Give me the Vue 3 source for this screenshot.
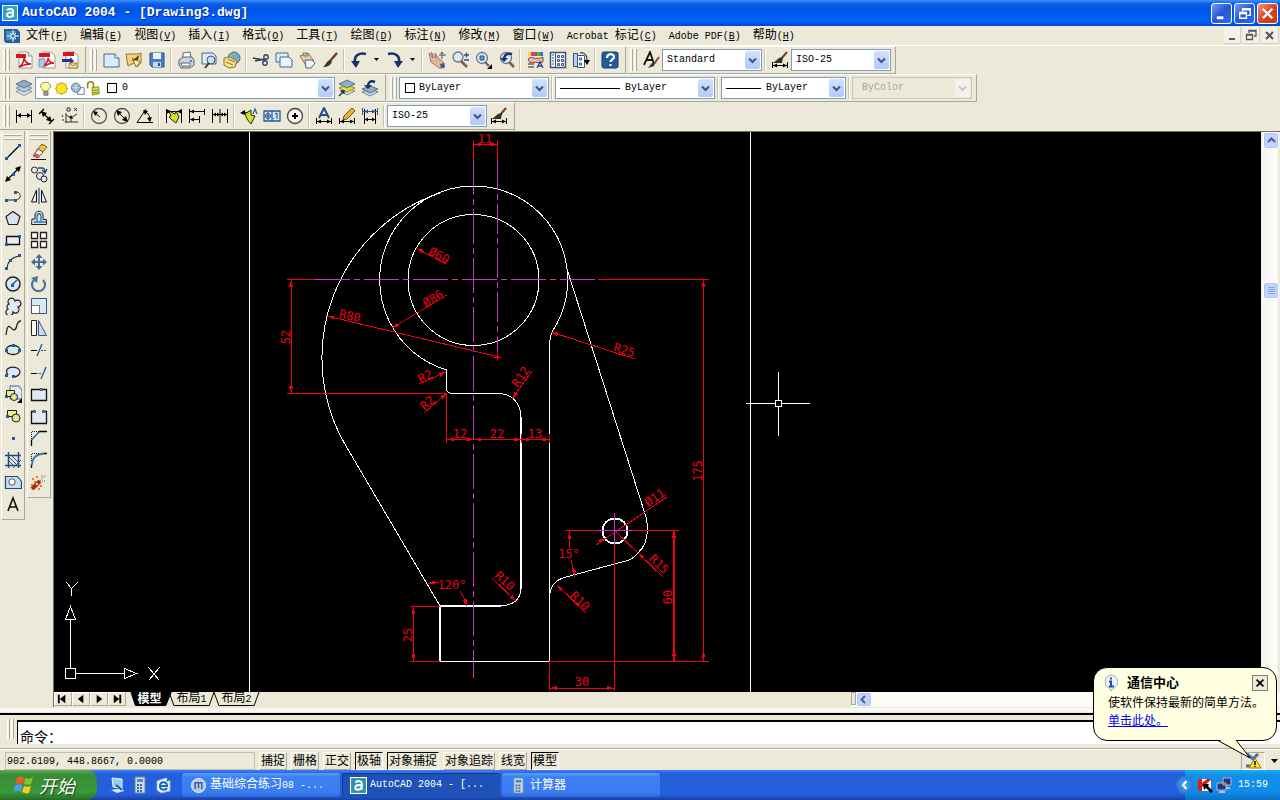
<script setup>
import { ref } from 'vue'

const I = {
  pdf: '<path d="M4 1h9l4 4v12H4z" fill="#fff" stroke="#999"/><path d="M13 1v4h4" fill="#ddd" stroke="#999"/><path d="M1 3h10v4H1z" fill="#d8141c"/><path d="M4 16c3-2 5-6 5-9 1 4 4 6 7 6-5 0-8 1-12 3" fill="none" stroke="#d8141c" stroke-width="1.6"/>',
  pdf2: '<path d="M5 1h8l4 4v12H5z" fill="#fff" stroke="#999"/><path d="M1 8h6v8H1z" fill="#aac8f4" stroke="#7294cc"/><path d="M1 2h11v4H1z" fill="#d8141c"/><path d="M6 15c2-2 4-5 4-8 1 4 3 5 6 5-4 0-6 1-10 3" fill="none" stroke="#d8141c" stroke-width="1.5"/>',
  pdf3: '<path d="M5 1h8l4 4v12H5z" fill="#fff" stroke="#999"/><path d="M2 1h11v4H2z" fill="#d8141c"/><path d="M1 8h8V6l4 4-4 4v-3H1z" fill="#2b2f98"/><path d="M8 12h8v5H8z" fill="#f7e3a0" stroke="#a28432"/><path d="M8 12l4 3 4-3" fill="none" stroke="#a28432"/>',
  new: '<path d="M2 3h11l4 4v9H2z" fill="#dcebfa" stroke="#45688f"/><path d="M13 3v4h4" fill="#fff" stroke="#45688f"/>',
  open: '<path d="M1 3l12 0 3-1v10l-4 4-3-4-6 3z" fill="#f0d480" stroke="#96752c"/><path d="M7 7l8 4-4 5z" fill="#fff0ae" stroke="#96752c"/><path d="M14 4l-7 6 6-1z" fill="#503c18"/>',
  save: '<path d="M2 2h14v14H4l-2-2z" fill="#4a7fc4" stroke="#284f8c"/><path d="M5 2h8v6H5z" fill="#edf4fc"/><path d="M5 11h8v5H5z" fill="#c6d9f0"/><path d="M10 12h2v3h-2z" fill="#284f8c"/>',
  print: '<path d="M6 7V2l7-1 1 6" fill="#fff" stroke="#667"/><path d="M2 9l4-3h9l2 3v5l-4 3H4l-2-3z" fill="#cdd2de" stroke="#5b617a"/><path d="M4 12h9v3H5z" fill="#fff" stroke="#5b617a"/><circle cx="14" cy="10" r="1" fill="#35a"/>',
  preview: '<path d="M2 2h11l3 3v8H2z" fill="#dcebfa" stroke="#45688f"/><circle cx="11" cy="9" r="4" fill="#bfe0ee" stroke="#456"/><path d="M9 12l-4 5" stroke="#4c3520" stroke-width="2"/>',
  publish: '<circle cx="11" cy="7" r="6" fill="#7cb4e4" stroke="#35648f"/><path d="M8 2c4 1 0 4 5 5M13 3l3 5" stroke="#7a9" stroke-width="2" fill="none"/><path d="M1 7l6-1 7 4-2 6-6 1-5-3z" fill="#f5de83" stroke="#8e742a"/><path d="M3 11l7 3M5 8l7 3" stroke="#8e742a"/>',
  cut: '<path d="M1 7l11 2M3 10l10-2" stroke="#333c4d" stroke-width="1.4"/><circle cx="14" cy="6" r="2.2" fill="none" stroke="#30446c" stroke-width="1.4"/><circle cx="13" cy="12" r="2.2" fill="none" stroke="#30446c" stroke-width="1.4"/>',
  copy: '<path d="M1 2h12v9H1z" fill="#dcebfa" stroke="#45688f"/><path d="M5 6h9l3 3v7H5z" fill="#e9f3fd" stroke="#45688f"/>',
  paste: '<path d="M2 5l8-3 6 8-7 6z" fill="#e5d3a0" stroke="#8b7647"/><path d="M5 2h4l1 3H6z" fill="#bbb" stroke="#777"/><path d="M7 9h7l3 3-4 5H8z" fill="#eef4fb" stroke="#567"/>',
  brush: '<path d="M16 2l-7 8" stroke="#6a3c20" stroke-width="2.4"/><path d="M9 9l2 2c-2 4-5 5-9 5 3-2 3-6 7-7" fill="#34363a"/>',
  undo: '<path d="M16 3C9 1 4 5 5 11" fill="none" stroke="#17336a" stroke-width="2.6"/><path d="M1 10h9l-4 7z" fill="#17336a"/>',
  redo: '<path d="M2 3c7-2 12 2 11 8" fill="none" stroke="#17336a" stroke-width="2.6"/><path d="M17 10H8l4 7z" fill="#17336a"/>',
  drop: '<path d="M2 7h5l-2.500 3z" fill="#000"/>',
  pan: '<path d="M1 2l4 5-2-6 5 6-1-5 4 6 2 1 3 3v5h-5L3 11z" fill="#e7b39c" stroke="#875544" stroke-width=".7"/><path d="M12 13l4-1 1 4-4 1z" fill="#325b9a"/><path d="M14 1v7M11 4h7M12.500 2.500l1.500-1.500 1.500 1.500" fill="none" stroke="#36547d"/>',
  zoomrt: '<circle cx="7" cy="6" r="5" fill="#d8eaf4" stroke="#697886" stroke-width="1.3"/><path d="M10 10l6 6" stroke="#805f43" stroke-width="2.6"/><path d="M13 4h5M15.500 1.500v5M13 9h5" stroke="#36547d" stroke-width="1.300"/>',
  zoomwin: '<circle cx="8" cy="7" r="5.500" fill="#d8eaf4" stroke="#697886" stroke-width="1.3"/><path d="M6 5h4v4H6z" fill="#6d99d2" stroke="#23559b"/><path d="M11 11l4 4" stroke="#805f43" stroke-width="2.400"/><path d="M18 13v5h-5z"/>',
  zoomprev: '<circle cx="9" cy="7" r="5.500" fill="#d8eaf4" stroke="#697886" stroke-width="1.300"/><path d="M15 3c-4-1-7 0-8 4" fill="none" stroke="#17336a" stroke-width="2.500"/><path d="M3 7h8l-4 4z" fill="#17336a"/><path d="M12 11l5 5" stroke="#805f43" stroke-width="2.600"/>',
  props: '<path d="M2 1h3v4H2z" fill="#f0e020"/><path d="M5 1h3v4H5z" fill="#e32bc0"/><path d="M8 1h3v4H8z" fill="#f23535"/><path d="M11 1h3v4h-3z" fill="#37c148"/><path d="M14 1h3v4h-3z" fill="#2878dc"/><path d="M2 8c4-4 7 2 15-2v5c-6 2-9-1-13 1z" fill="#eab6a0" stroke="#80513d"/><path d="M2 13h6M2 16h6" stroke="#888" stroke-width="2"/><path d="M11 17l3-6 3 6M12 15h4" stroke="#234a80" fill="none" stroke-width="1.300"/>',
  dc: '<path d="M1.500 1.500h15v15h-15z" fill="#fff" stroke="#35547e" stroke-width="1.500"/><path d="M6.500 2v14" stroke="#35547e"/><path d="M3 4h2M3 7h2M3 10h2M3 13h2" stroke="#35547e"/><path d="M8.500 4.500h2v2h-2zM12.500 4.500h2v2h-2zM8.500 8.500h2v2h-2zM12.500 8.500h2v2h-2zM8.500 12.500h2v2h-2zM12.500 12.500h2v2h-2z" fill="#dce8f6" stroke="#35547e"/>',
  tp: '<path d="M1.500 2.500h4v13h-4z" fill="#b8cff0" stroke="#35547e"/><path d="M5.500 4.500h7v12h-7z" fill="#fff" stroke="#35547e"/><path d="M7.500 7h2v2h-2zM7.500 12h2v2h-2z" fill="none" stroke="#35547e"/><path d="M8 2c6-1 7 3 7 8" fill="none" stroke="#111"/><path d="M12 9h6l-3 5z"/>',
  help: '<rect x="1" y="1" width="16" height="16" rx="2" fill="#225a9c" stroke="#143a70"/><path d="M6 7c0-5 7-5 7-1 0 2.500-3.500 2.500-3.500 5M9.500 13v2" fill="none" stroke="#fff" stroke-width="2.200"/>',
  textstyle: '<path d="M2 14L8 1l4 12M4 9h7" fill="none" stroke="#111" stroke-width="1.800"/><path d="M17 6l-5 7" stroke="#8b4d33" stroke-width="2"/><path d="M13 11l-1 4-6 2 4-5z" fill="#333"/>',
  dimstyle: '<path d="M1.500 11v6M16.500 11v6M2 14.500h14" stroke="#000" fill="none"/><path d="M2 14.500l4-2v4zM16 14.500l-4-2v4z"/><path d="M16 1l-6 7" stroke="#7a3a22" stroke-width="2"/><path d="M12 6l-1 6H2l6-5z" fill="#333"/>',
  layers: '<path d="M9 9l8 3.500-8 4-8-4z" fill="#d2dfea" stroke="#8397aa"/><path d="M9 5l8 4-8 4-8-4z" fill="#b7cce2" stroke="#7089a4"/><path d="M9 1l8 4-8 4-8-4z" fill="#8eabc7" stroke="#567392"/>',
  mklayer: '<path d="M9 9l8 3-8 4-7-4z" fill="#ccd8e2" stroke="#8090a0"/><path d="M9 6l8 3-8 4-8-4z" fill="#f2dc2a" stroke="#96861c"/><path d="M9 1l8 4-8 4-8-4z" fill="#8eabc7" stroke="#567392"/><path d="M1 17l5-5M3 12h3v3" stroke="#122c64" stroke-width="1.300" fill="none"/>',
  prevlayer: '<path d="M9 10l8 3-8 4-8-4z" fill="#c5d5e5" stroke="#7089a4"/><path d="M9 7l8 3-8 4-8-4z" fill="#8eabc7" stroke="#567392"/><path d="M14 3c-5-2-7 1-7 4" stroke="#17336a" stroke-width="2.500" fill="none"/><path d="M3 6h8l-4 4z" fill="#17336a"/>',
  bulb: '<path d="M6 12c0-3-3-3-3-6 0-6 12-6 12 0 0 3-3 3-3 6z" fill="#fff8a0" stroke="#8b7b35"/><path d="M7 13h5v4H7z" fill="#aaa" stroke="#555"/>',
  sun: '<path d="M2 2l14 14M16 2L2 16M9 1v16M1 9h16" stroke="#d3b400"/><circle cx="9" cy="9" r="6.500" fill="#fce622" stroke="#a28a10"/>',
  frz: '<path d="M9 8h8v8H9z" fill="#fff" stroke="#668"/><circle cx="7" cy="8" r="5.500" fill="#8ba9bc" stroke="#557489"/><path d="M2 8h10M7 3v10M4 4l6 8M10 4l-6 8" stroke="#cfdee7"/>',
  lock: '<path d="M2 9V4c0-4 7-4 7 0v5" stroke="#8e821c" stroke-width="1.800" fill="none"/><path d="M7 8l8-1 1 8-8 2z" fill="#dce334" stroke="#7e811d"/><path d="M8 11h7M8 14h7" stroke="#7e811d"/>',
  dlin: '<path d="M1.500 3v13M16.500 3v13M2 8.500h14" stroke="#000" fill="none"/><path d="M2 8.500l4-2.500v5zM16 8.500l-4-2.500v5z"/>',
  dali: '<path d="M1 7l5-5M11 17l5-5M4 5l9 9" stroke="#000" stroke-width="1.300" fill="none"/><path d="M3 4l6 2-4 4zM14 15l-6-2 4-4z"/>',
  dord: '<path d="M4 15h13M5 6v10M5 8l5 3 6-4M10 11v4" stroke="#333" fill="none"/><path d="M10 8l-2 3 4 1z"/><path d="M6 1h3v3H6zM13 1l3 3M16 1l-3 3M1 8l1 2M1 13h2" stroke="#333" fill="none"/>',
  drad: '<circle cx="9" cy="9" r="7.500" fill="none" stroke="#555" stroke-width="1.300"/><path d="M4 5l6 5" stroke="#000"/><path d="M3 4l5 1-3 4z"/>',
  ddia: '<circle cx="9" cy="9" r="7.500" fill="none" stroke="#555" stroke-width="1.300"/><path d="M4 4l10 10" stroke="#000"/><path d="M3 3l6 2-4 4zM15 15l-6-2 4-4z"/>',
  dang: '<path d="M10 2L1 15.500h16M8 4c5 2 6 6 6 10" stroke="#000" fill="none"/><path d="M7 3l5 1-3 4zM14 15l-3-4 5-1z"/>',
  dqk: '<path d="M1.500 2v14M16.500 2v14M2 4.500h14" stroke="#000" fill="none"/><path d="M2 2.500l5 2-5 2zM16 2.500l-4 2 4 2z"/><path d="M4 4l6 3 1-3 3 6-3 6-4-3-3-3 2-1z" fill="#d9e022" stroke="#222"/>',
  dbase: '<path d="M1.500 2v14M2 4.500h15M2 12.500h9M11.500 9v7M16.500 2v6" stroke="#000" fill="none"/><path d="M2 4.500l4-2v4zM2 12.500l4-2v4z"/>',
  dcont: '<path d="M1.500 2v14M9 2v14M16.500 2v14M2 7.500h14" stroke="#000" fill="none"/><path d="M2 7.500l3-2v4zM9 7.500l-3-2v4zM9 7.500l3-2v4zM16 7.500l-3-2v4z"/>',
  lead: '<path d="M11 5L2 6" stroke="#222" fill="none"/><path d="M0 6l5-3v5z"/><path d="M5 7l6-4 0 5 4 1-4 8-4-5z" fill="#d9e022" stroke="#222"/><path d="M13 7l2-5 2 5" stroke="#2767a5" fill="none" stroke-width="1.300"/>',
  tol: '<path d="M1 4h16v10H1z" fill="#d6e8fa" stroke="#24598e" stroke-width="1.300"/><circle cx="5" cy="9" r="2.500" fill="none" stroke="#24598e"/><path d="M5 5v8M2 9h6M9 4v10M10.500 12v-1M14 6v6M12 7l2-1" stroke="#24598e" fill="none" stroke-width="1.200"/>',
  cmark: '<circle cx="9" cy="9" r="7.500" fill="#f6f5ec" stroke="#444" stroke-width="1.300"/><path d="M6 9h6M9 6v6" stroke="#000" stroke-width="2"/>',
  dedit: '<path d="M4 11L9 1l5 10M6 8h6" stroke="#244e86" fill="none" stroke-width="2"/><path d="M1.500 11v6M16.500 11v6M2 14.500h14" stroke="#000"/><path d="M2 14.500l4-2v4zM16 14.500l-4-2v4z"/>',
  dtedit: '<path d="M14 1l3 3-8 8-4 1 1-4z" fill="#e9b338" stroke="#68451a"/><path d="M1.500 11v6M16.500 11v6M2 14.500h14" stroke="#000"/><path d="M2 14.500l4-2v4zM16 14.500l-4-2v4z"/>',
  dupd: '<path d="M3.500 2v15M14.500 2v15M4 12.500h10" stroke="#000"/><path d="M1 4.500h16M1.500 1v7M16.500 1v7" stroke="#24598e"/><path d="M3 4.500l4-2v4zM15 4.500l-4-2v4z" fill="#24598e"/><path d="M4 12.500l3-2v4zM14 12.500l-3-2v4z"/>',
  line: '<path d="M3 15L15 3" stroke="#000" stroke-width="1.300"/><path d="M1 14h3v3H1zM14 1h3v3h-3z" fill="#1c5e9e"/>',
  xline: '<path d="M3 15L15 3" stroke="#000" stroke-width="1.300"/><path d="M1 17l2-6 4 4zM17 1l-6 2 4 4z"/><path d="M8 8h3v3H8z" fill="#1c5e9e"/>',
  pline: '<path d="M2 13h9M11 5c7-1 7 8 0 8" fill="none" stroke="#222"/><path d="M1 12h3v3H1zM10 12h3v3h-3zM10 4h3v3h-3z" fill="#1c5e9e"/>',
  poly: '<path d="M9 2.500l7 5-2.500 8h-9L2 7.500z" fill="#d7e5f3" stroke="#222" stroke-width="1.200"/>',
  rect: '<path d="M2.500 5.500h13v8h-13z" fill="#e6edf5" stroke="#111" stroke-width="1.300"/><path d="M1 12h3v3H1zM14 4h3v3h-3z" fill="#1c5e9e"/>',
  arc: '<path d="M3 15Q4 5 15 3" fill="none" stroke="#222" stroke-width="1.200"/><path d="M1 14h3v3H1zM14 1h3v3h-3zM5 6h3v3H5z" fill="#1c5e9e"/>',
  circle: '<circle cx="9" cy="9" r="7" fill="#dce8f3" stroke="#222" stroke-width="1.500"/><path d="M8 10l5-5" stroke="#1c5e9e" stroke-width="1.500"/><path d="M7 9h3v3H7z" fill="#1c5e9e"/>',
  cloud: '<path d="M5 7a3.500 3.500 0 1 1 6-3 3.500 3.500 0 1 1 3 6 3.500 3.500 0 1 1-5 5 3.500 3.500 0 1 1-5-3 3 3 0 0 1 1-5z" fill="#dce8f3" stroke="#222" stroke-width="1.200"/>',
  spline: '<path d="M2 16c2-16 5-5 8-5 4 0 1-9 7-9" fill="none" stroke="#222" stroke-width="1.300"/>',
  ellipse: '<ellipse cx="9" cy="9" rx="7" ry="4.500" fill="#dce8f3" stroke="#222" stroke-width="1.300"/><path d="M1 8h3v3H1zM14 8h3v3h-3zM8 3h3v3H8z" fill="#1c5e9e"/>',
  earc: '<path d="M4 12C-1 5 8 3 13 5c6 3 2 9-4 9" fill="#dce8f3" stroke="#222" stroke-width="1.200"/><path d="M1 11h3v3H1zM8 12h3v3H8z" fill="#1c5e9e"/>',
  insb: '<path d="M6 1h9l3 4v9H6z" fill="#dce8f3" stroke="#45688f"/><path d="M2.500 5.500h8v6h-8z" fill="#f4f085" stroke="#222"/><circle cx="10" cy="12" r="3.500" fill="#dce99a" stroke="#222"/><path d="M1 10h3v3H1z" fill="#1c5e9e"/><path d="M18 13v5h-5z"/>',
  mkb: '<path d="M3.500 3.500h9v6h-9z" fill="#f4f085" stroke="#222"/><circle cx="12" cy="11" r="4" fill="#dce99a" stroke="#222"/><path d="M2 8h3v3H2z" fill="#1c5e9e"/>',
  point: '<path d="M8 8h3v3H8z" fill="#1c5e9e"/>',
  hatch: '<path d="M1 4.500h16M1 14.500h16M4.500 1v16M14.500 1v16" stroke="#1d4b83" stroke-width="1.500"/><path d="M5 6l8 8M8 5l6 6M5 10l4 4M17 9l-8 8" stroke="#1d4b83"/>',
  region: '<path d="M1.500 3.500h12l4 5v7h-16z" fill="#c9ddf0" stroke="#1d4b83" stroke-width="1.200"/><circle cx="8" cy="9" r="3.200" fill="#fff" stroke="#555"/>',
  mtext: '<path d="M4 16L9 3l5 13M6 12h6" fill="none" stroke="#111" stroke-width="1.600"/>',
  erase: '<path d="M1 16.500h15" stroke="#111"/><path d="M12 1l5 3-6 7-5-3z" fill="#f0c23c" stroke="#775a19"/><path d="M8 6l5 3-5 6-5-2z" fill="#fff" stroke="#75423c"/><path d="M5 10l5 2-3 3-4-2z" fill="#d4584c"/>',
  copyobj: '<circle cx="4.500" cy="5" r="3" fill="#eee" stroke="#222"/><circle cx="10" cy="11" r="3.500" fill="#dce8f3" stroke="#222"/><circle cx="14" cy="14" r="3" fill="#dce8f3" stroke="#222"/><path d="M8 3h4c3 0 3 2 3 4M12 5l3 3 2-4" fill="none" stroke="#1d4b83" stroke-width="1.400"/>',
  mirror: '<path d="M6.500 3v12H1.500zM11.500 3v12h5z" fill="#eee" stroke="#111"/><path d="M9 1v16" stroke="#1c5e9e" stroke-width="1.300"/>',
  offset: '<path d="M1.500 15.500h15v-5H13V6c0-5-8-5-8 0v4H2z" fill="#d5e4f3" stroke="#222"/><path d="M4 13h12M7 12V7c0-3 4-3 4 0v5" stroke="#2b6db1" fill="none" stroke-width="1.300"/>',
  array: '<path d="M1.500 1.500h6v6h-6zM10.500 1.500h6v6h-6zM1.500 10.500h6v6h-6zM10.500 10.500h6v6h-6z" fill="#fff" stroke="#222" stroke-width="1.300"/>',
  move: '<path d="M9 3v12M3 9h12" stroke="#456b98" stroke-width="2"/><path d="M9 1L5.500 5h7zM9 17l-3.500-4h7zM1 9l4-3.500v7zM17 9l-4-3.500v7z" fill="#456b98"/>',
  rotate: '<path d="M4 5a6.500 6.500 0 1 0 9 0" fill="none" stroke="#507194" stroke-width="2.200"/><path d="M1 3l7-2-1 7z" fill="#507194"/>',
  scale: '<path d="M1.500 1.500h15v15h-15z" fill="#dae7f4" stroke="#355a84"/><path d="M1.500 8.500h8v8h-8z" fill="#fff" stroke="#000" stroke-dasharray="1 1"/>',
  stretch: '<path d="M1.500 1.500h5v15h-5z" fill="#fff" stroke="#222"/><path d="M8.500 1.500v15h8z" fill="#c8daed" stroke="#355a84"/>',
  trim: '<path d="M1 9.500h6" stroke="#000"/><path d="M11 9.500h6" stroke="#245a97" stroke-dasharray="2 1"/><path d="M7 15l5-12" stroke="#245a97" stroke-width="1.300"/>',
  extend: '<path d="M1 10.500h5" stroke="#000"/><path d="M6 10.500h6" stroke="#245a97" stroke-dasharray="2 1"/><path d="M11 16l5-12" stroke="#245a97" stroke-width="1.300"/>',
  brk1: '<path d="M1.500 4.500h15v11h-15z" fill="#e2e9f1" stroke="#111" stroke-width="1.300"/><path d="M10 3h3v3h-3z" fill="#456b98"/>',
  brk: '<path d="M4 4.500H1.500v12h15v-12H14" fill="#e2e9f1" stroke="#111" stroke-width="1.300"/><path d="M3 3h3v3H3zM12 3h3v3h-3z" fill="#456b98"/>',
  chamfer: '<path d="M1.500 17v-6M9 2.500h8" stroke="#000" stroke-width="1.300"/><path d="M1.500 11l8-8.500" stroke="#245a97" stroke-width="1.300"/><path d="M1.500 10V2.500H9" fill="none" stroke="#222" stroke-dasharray="1 1"/>',
  fillet: '<path d="M1.500 17v-4M14 2.500h3" stroke="#000" stroke-width="1.300"/><path d="M2 14C2 6 7 3 14 2.500" fill="none" stroke="#3d75b8" stroke-width="1.800"/><path d="M1.500 10V2.500H9" fill="none" stroke="#222" stroke-dasharray="1 1"/>',
  explode: '<path d="M2 16l8-8" stroke="#b22a18" stroke-width="4"/><path d="M2 5h2v2H2zM6 3h2v2H6zM4 8h2v2H4zM1 11h2v2H1zM10 12h2v2h-2zM8 15h2v2H8z" fill="#f27b22"/><path d="M10 8l6-6M12 8h4M12 2v4" stroke="#666" stroke-dasharray="1 1"/><path d="M6 10h2v2H6z" fill="#ffe36a"/>',
}

const standard = [
  ['new', '新建'], ['open', '打开'], ['save', '保存'], null,
  ['print', '打印'], ['preview', '打印预览'], ['publish', '发布'], null,
  ['cut', '剪切'], ['copy', '复制'], ['paste', '粘贴'], ['brush', '特性匹配'], null,
  ['undo', '放弃'], ['drop', '放弃列表', 1], ['redo', '重做'], ['drop', '重做列表', 1], null,
  ['pan', '实时平移'], ['zoomrt', '实时缩放'], ['zoomwin', '窗口缩放'], ['zoomprev', '缩放上一个'], null,
  ['props', '特性'], ['dc', '设计中心'], ['tp', '工具选项板'], null, ['help', '帮助'],
]
const pdf = [['pdf', '转换为 PDF'], ['pdf2', '转换并发送'], ['pdf3', '转换并审阅']]
const dims = [
  ['dlin', '线性标注'], ['dali', '对齐标注'], ['dord', '坐标标注'], null,
  ['drad', '半径标注'], ['ddia', '直径标注'], ['dang', '角度标注'], null,
  ['dqk', '快速标注'], ['dbase', '基线标注'], ['dcont', '连续标注'], null,
  ['lead', '快速引线'], ['tol', '公差'], ['cmark', '圆心标记'], null,
  ['dedit', '编辑标注'], ['dtedit', '编辑标注文字'], ['dupd', '标注更新'],
]
const draw = [['line', '直线'], ['xline', '构造线'], ['pline', '多段线'], ['poly', '正多边形'], ['rect', '矩形'], ['arc', '圆弧'], ['circle', '圆'], ['cloud', '修订云线'], ['spline', '样条曲线'], ['ellipse', '椭圆'], ['earc', '椭圆弧'], ['insb', '插入块'], ['mkb', '创建块'], ['point', '点'], ['hatch', '图案填充'], ['region', '面域'], ['mtext', '多行文字']]
const modify = [['erase', '删除'], ['copyobj', '复制对象'], ['mirror', '镜像'], ['offset', '偏移'], ['array', '阵列'], ['move', '移动'], ['rotate', '旋转'], ['scale', '缩放'], ['stretch', '拉伸'], ['trim', '修剪'], ['extend', '延伸'], ['brk1', '打断于点'], ['brk', '打断'], ['chamfer', '倒角'], ['fillet', '圆角'], ['explode', '分解']]

const menus = [['', '文件', 'F'], ['', '编辑', 'E'], ['', '视图', 'V'], ['', '插入', 'I'], ['', '格式', 'O'], ['', '工具', 'T'], ['', '绘图', 'D'], ['', '标注', 'N'], ['', '修改', 'M'], ['', '窗口', 'W'], ['Acrobat ', '标记', 'C'], ['Adobe PDF', '', 'B'], ['', '帮助', 'H']]
const modes = ref([['捕捉', 0], ['栅格', 0], ['正交', 0], ['极轴', 1], ['对象捕捉', 1], ['对象追踪', 0], ['线宽', 0], ['模型', 1]])
const command = ref('')
const balloon = ref(true)

/* arrowheads: tip x, tip y, heading in degrees */
const arrows = [
  [474, 144.5, 180], [497, 144.5, 0], [291, 280, -90], [291, 393, 90],
  [327, 316, 193], [416, 248, 208], [392, 328, 150], [551, 332, 198],
  [446, 372, -24], [447, 393, -40], [512, 399, 125],
  [447, 439.5, 180], [473, 439.5, 0], [474, 439.5, 180], [521, 439.5, 0], [522, 439.5, 180], [549, 439.5, 0],
  [703.5, 280, -90], [703.5, 661, 90], [674, 531, -90], [674, 661, 90],
  [550, 688, 180], [614, 688, 0], [413.5, 607, -90], [413.5, 661, 90],
  [428, 584, 165], [467, 606, 70], [569, 532, -95], [575, 577, 80],
  [605, 538, -34], [638, 553, 222], [557, 585, 225], [516, 601, 42],
]
/* labels: text, anchor x, baseline y, rotation */
const labels = [
  ['11', 485, 143, 0], ['Ø60', 437, 259, 28], ['Ø86', 435, 302, -31], ['R80', 349, 320, 13],
  ['52', 290, 337, -90], ['R25', 623, 354, 18], ['R2', 427, 380, -26], ['R2', 430, 406, -40],
  ['R12', 524, 379, -55], ['12', 460, 438, 0], ['22', 497, 438, 0], ['13', 535, 438, 0],
  ['175', 702, 471, -90], ['Ø11', 657, 501, -33], ['15°', 569, 558, 0], ['R15', 656, 567, 44],
  ['60', 672, 597, -90], ['R10', 577, 604, 44], ['R10', 502, 584, 42], ['120°', 452, 589, 0],
  ['25', 412, 635, -90], ['30', 582, 686, 0],
]
</script>

<template>
  <div class="app">
    <header class="title">
      <svg class="logo" viewBox="0 0 16 16"><rect x=".5" y=".5" width="15" height="15" fill="#35a3b8" stroke="#fff" /><path d="M5 5c3-2 6-1 6 1v6M11 8c-4-1-6 0-6 2s4 3 6 0" fill="none" stroke="#fff" stroke-width="2" /></svg>
      <h1>AutoCAD 2004 - [Drawing3.dwg]</h1>
      <div class="winbtns">
        <button aria-label="最小化"><svg viewBox="0 0 20 20"><path d="M5 13h7v3H5z" fill="#fff" /></svg></button>
        <button aria-label="还原"><svg viewBox="0 0 20 20"><path d="M8 8V5h8v7h-3M8 6h8M5 9h7v6H5zM5 10h7" fill="none" stroke="#fff" stroke-width="1.500" /></svg></button>
        <button class="close" aria-label="关闭"><svg viewBox="0 0 20 20"><path d="M5 5l10 10M15 5L5 15" stroke="#fff" stroke-width="2.500" /></svg></button>
      </div>
    </header>

    <nav class="menu">
      <svg class="docicon" viewBox="0 0 16 16"><path d="M0 1h13l3 3v11H2l-2-2z" fill="#245f9b" /><path d="M2 3h10v9H2z" fill="#3e8fc9" /><path d="M9 2v12M3 8h12M6 5l6 6M12 5l-6 6" stroke="#fff" /><circle cx="9" cy="8" r="2" fill="#245f9b" stroke="#fff" /></svg>
      <button v-for="m in menus" :key="m[2]"><span><span v-if="m[0]" class="m">{{ m[0] }}</span>{{ m[1] }}<span class="m">(<u>{{ m[2] }}</u>)</span></span></button>
      <div class="docbtns">
        <button aria-label="最小化图形"><svg viewBox="0 0 16 16"><path d="M5 11h6v2H5z" fill="#555" /></svg></button>
        <button aria-label="还原图形"><svg viewBox="0 0 16 16"><path d="M6 6V3.500h7V9h-2M6 4h7M3.500 7.500h6v5h-6zM3 8h7" fill="none" stroke="#555" stroke-width="1.300" /></svg></button>
        <button aria-label="关闭图形"><svg viewBox="0 0 16 16"><path d="M4 5l7 7M11 5l-7 7" stroke="#555" stroke-width="2" /></svg></button>
      </div>
    </nav>

    <div class="row">
      <div class="bar"><i class="grip"></i><button v-for="b in pdf" :key="b[0]" class="tb" :aria-label="b[1]"><svg viewBox="0 0 18 18" v-html="I[b[0]]"></svg></button></div>
      <div class="bar"><i class="grip"></i>
        <template v-for="(b, n) in standard" :key="n">
          <button v-if="b" class="tb" :class="{ slim: b[2] }" :aria-label="b[1]"><svg :viewBox="b[2] ? '0 0 9 18' : '0 0 18 18'" v-html="I[b[0]]"></svg></button>
          <i v-else class="sep"></i>
        </template>
      </div>
      <div class="bar"><i class="grip"></i>
        <button class="tb" aria-label="文字样式"><svg viewBox="0 0 18 18" v-html="I.textstyle"></svg></button>
        <div class="combo w100"><select aria-label="文字样式列表"><option>Standard</option></select><b class="arrow"><svg viewBox="0 0 9 9"><path d="M1 2.500l3.500 3.500L8 2.500" /></svg></b></div>
        <i class="sep"></i>
        <button class="tb" aria-label="标注样式"><svg viewBox="0 0 18 18" v-html="I.dimstyle"></svg></button>
        <div class="combo w100"><select aria-label="标注样式列表"><option>ISO-25</option></select><b class="arrow"><svg viewBox="0 0 9 9"><path d="M1 2.500l3.500 3.500L8 2.500" /></svg></b></div>
      </div>
    </div>

    <div class="row">
      <div class="bar"><i class="grip"></i>
        <button class="tb" aria-label="图层特性管理器"><svg viewBox="0 0 18 18" v-html="I.layers"></svg></button>
        <div class="combo w300">
          <svg v-for="k in ['bulb', 'sun', 'frz', 'lock']" :key="k" class="li" viewBox="0 0 18 18" v-html="I[k]"></svg>
          <i class="swatch"></i>
          <select aria-label="图层"><option>0</option></select><b class="arrow"><svg viewBox="0 0 9 9"><path d="M1 2.500l3.500 3.500L8 2.500" /></svg></b>
        </div>
        <button class="tb" aria-label="将对象的图层置为当前"><svg viewBox="0 0 18 18" v-html="I.mklayer"></svg></button>
        <button class="tb" aria-label="上一个图层"><svg viewBox="0 0 18 18" v-html="I.prevlayer"></svg></button>
      </div>
      <div class="bar"><i class="grip"></i>
        <div class="combo w150"><i class="swatch first"></i><select aria-label="颜色"><option>ByLayer</option></select><b class="arrow"><svg viewBox="0 0 9 9"><path d="M1 2.500l3.500 3.500L8 2.500" /></svg></b></div>
        <i class="sep"></i>
        <div class="combo w160"><i class="sample long"></i><select aria-label="线型"><option>ByLayer</option></select><b class="arrow"><svg viewBox="0 0 9 9"><path d="M1 2.500l3.500 3.500L8 2.500" /></svg></b></div>
        <i class="sep"></i>
        <div class="combo w125"><i class="sample"></i><select aria-label="线宽"><option>ByLayer</option></select><b class="arrow"><svg viewBox="0 0 9 9"><path d="M1 2.500l3.500 3.500L8 2.500" /></svg></b></div>
        <i class="sep"></i>
        <div class="combo w120 off"><select aria-label="打印样式" disabled><option>ByColor</option></select><b class="arrow"><svg viewBox="0 0 9 9"><path d="M1 2.500l3.500 3.500L8 2.500" /></svg></b></div>
      </div>
    </div>

    <div class="row">
      <div class="bar"><i class="grip"></i>
        <template v-for="(b, n) in dims" :key="n">
          <button v-if="b" class="tb" :aria-label="b[1]"><svg viewBox="0 0 18 18" v-html="I[b[0]]"></svg></button>
          <i v-else class="sep"></i>
        </template>
        <i class="sep"></i>
        <div class="combo w100"><select aria-label="标注样式"><option>ISO-25</option></select><b class="arrow"><svg viewBox="0 0 9 9"><path d="M1 2.500l3.500 3.500L8 2.500" /></svg></b></div>
        <button class="tb" aria-label="标注样式管理器"><svg viewBox="0 0 18 18" v-html="I.dimstyle"></svg></button>
      </div>
    </div>

    <main class="work">
      <div class="palettes">
        <div v-for="(p, n) in [draw, modify]" :key="n" class="palette">
          <i class="vgrip"></i>
          <button v-for="b in p" :key="b[0]" class="pb" :aria-label="b[1]"><svg viewBox="0 0 18 18" v-html="I[b[0]]"></svg></button>
        </div>
      </div>
      <div class="view">
        <div class="stage">
          <svg class="canvas" shape-rendering="crispEdges">
            <g transform="translate(-54 -132)" fill="none">
              <g stroke="#fff">
                <path d="M249.500 130V2000M750.500 130V2000" />
                <path d="M446.500 370A94 94 0 1 1 552 332Q549.500 338 549.500 346V661H440" />
                <circle cx="473.500" cy="280" r="65.500" />
                <path d="M440 193A174 174 0 0 0 346 446L440 606" />
                <path d="M567 269L646 517Q651 541 638 553Q633 560 622 562L566 577Q550 581 549.500 597" />
                <path d="M446.500 370V389Q447 393 452 393.500H497C512 393 521 403 521 418" />
                <path d="M521 588C521 600 512 606 499 606" />
                <path d="M521 417V589M501 606H440V661" stroke-width="2" />
                <circle cx="615" cy="531" r="12.500" stroke-width="2" />
                <path d="M746 403.500H776M781 403.500H810M778.500 372V401M778.500 406V436M775.500 400.500h6v6h-6z" />
                <path d="M65.500 668.500h10v10h-10zM70.500 668V620M65.500 619.500l5-13 5 13zM76 673.500H124M124.500 668.500l12 5-12 5z" />
                <path d="M66.500 582.500l5 6 6-6M71.500 588V596M148.500 667.500l11 13M159.500 667.500l-11 13" />
              </g>
              <g stroke="#cc38bc">
                <path d="M473.500 160V678" stroke-dasharray="35 4 6 4" />
                <path d="M497.500 160V350" stroke-dasharray="30 4 6 4" />
                <path d="M315 279.500H598" stroke-dasharray="35 4 6 4" />
              </g>
              <g stroke="#f00016">
                <path d="M473.500 140V160M497.500 140V160M473 144.500H498M497.500 350V361M493 357.500h8" />
                <path d="M287 279.500H315M598 279.500H709M291 280V393M287 393.500H447" />
                <path d="M327 316L499 357M416 248L446 264M392 328L447 295M551 332L635 359" />
                <path d="M446 372L419 384M447 393L424 413M512 399L532 371" />
                <path d="M446.500 393V443M446 439.500H549M521.500 434v9M549.500 434v9" />
                <path d="M703.500 280V661M549 661.500H709M410 661.500H440M410 606.500H440M413.500 607V661" />
                <path d="M674 531V661" stroke-width="2" />
                <path d="M565 530.500H679M614.500 545V691M549.500 661V691M549 688.500H615" />
                <path d="M596 545L667 497M615 531L663 577M557 585L586 613M516 601L492 578" />
                <path d="M428 584Q433 582 439 582M460 591Q465 598 467 606M569.500 531V548M571 560L575 577" />
              </g>
              <path d="M598 530.500H632M614.500 513V545" stroke="#d52cd0" />
              <path v-for="(a, n) in arrows" :key="n" d="M0 0l-7-2v4z" fill="#f00016" :transform="`translate(${a[0]} ${a[1]}) rotate(${a[2]})`" />
              <text v-for="(t, n) in labels" :key="'t' + n" class="dim" :transform="`translate(${t[1]} ${t[2]}) rotate(${t[3]})`">{{ t[0] }}</text>
            </g>
          </svg>
          <div class="vscroll">
            <button class="sb" aria-label="向上滚动"><svg viewBox="0 0 9 9"><path d="M1 6l3.500-3.500L8 6" /></svg></button>
            <button class="sb thumb" aria-label="滚动块"><svg viewBox="0 0 9 9"><path d="M1 1.500h7M1 3.500h7M1 5.500h7M1 7.500h7" /></svg></button>
          </div>
        </div>
        <div class="strip">
          <div class="nav">
            <button aria-label="第一个"><svg viewBox="0 0 17 14"><path d="M3 2h2v9H3zM11 2v9L5 6.500z" /></svg></button>
            <button aria-label="上一个"><svg viewBox="0 0 17 14"><path d="M11 2v9L5 6.500z" /></svg></button>
            <button aria-label="下一个"><svg viewBox="0 0 17 14"><path d="M6 2v9l6-4.500z" /></svg></button>
            <button aria-label="最后一个"><svg viewBox="0 0 17 14"><path d="M5 2v9l6-4.500zM11 2h2v9h-2z" /></svg></button>
          </div>
          <div class="tabs">
            <button class="on"><svg viewBox="0 0 48 14" preserveAspectRatio="none"><path d="M1 0l5 13.500h34L46 0" /></svg><span>模型</span></button>
            <button><svg viewBox="0 0 48 14" preserveAspectRatio="none"><path d="M1 0l5 13.500h36L47 0" /></svg><span>布局<span class="m">1</span></span></button>
            <button><svg viewBox="0 0 48 14" preserveAspectRatio="none"><path d="M1 0l5 13.500h36L47 0" /></svg><span>布局<span class="m">2</span></span></button>
          </div>
          <div class="hscroll"><i class="split"></i><button class="sb" aria-label="向左滚动"><svg viewBox="0 0 9 9"><path d="M6 1L2.500 4.500 6 8" /></svg></button></div>
        </div>
      </div>
    </main>

    <section class="cmd">
      <i class="grip"></i>
      <div class="cmdbox"><label for="cmd">命令：</label><input id="cmd" v-model="command" autocomplete="off"></div>
    </section>

    <section class="status">
      <div class="coords">902.6109, 448.8667, 0.0000</div>
      <button v-for="s in modes" :key="s[0]" :class="{ down: s[1] }" @click="s[1] = !s[1]">{{ s[0] }}</button>
      <div class="stray">
        <span class="comm"><svg viewBox="0 0 18 16"><path d="M3 1l6 5 5-5M2 13h7" stroke="#4d6eab" stroke-width="3" fill="none" /><path d="M11 5l6 10H5z" fill="#ffe526" stroke="#957d00" /><path d="M11 8v4M11 13v1" stroke="#000" stroke-width="1.500" /></svg></span>
        <button aria-label="状态栏菜单"><svg viewBox="0 0 9 9"><path d="M1 3h7l-3.500 4z" /></svg></button>
      </div>
    </section>

    <footer class="task">
      <button class="start">
        <svg viewBox="0 0 20 20"><path d="M3 3c3-2 5-1 7 0L9 9C6 8 4 8 1 9z" fill="#ee5a28" /><path d="M11 3c3 1 5 1 8-1l-2 7c-3 1-5 1-7 0z" fill="#80c334" /><path d="M1 10c3-1 5-1 7 0l-1 7c-3-2-5-1-8 0z" fill="#4b9bf5" /><path d="M10 11c2 1 4 1 7 0l-2 7c-2 1-5 0-7-1z" fill="#fbc91c" /></svg>
        <span>开始</span>
      </button>
      <div class="quick">
        <button aria-label="显示桌面"><svg viewBox="0 0 18 18"><path d="M4 2l10 1v9l-9-1z" fill="#8fd0f7" stroke="#e1f2fd" /><path d="M3 14l11-2 2 3-7 2z" fill="#d9e7ef" /><path d="M8 9l6 5" stroke="#2757a0" stroke-width="2" /></svg></button>
        <button aria-label="计算器快捷方式"><svg viewBox="0 0 18 18"><path d="M4 1h10v16H4z" fill="#c8dcf2" stroke="#6484ad" /><path d="M6 3h6v3H6z" fill="#5488be" /><path d="M6 9h2M9 9h2M6 12h2M9 12h2M6 15h2M9 15h2" stroke="#49688f" stroke-width="2" /></svg></button>
        <button aria-label="浏览器"><svg viewBox="0 0 18 18"><path d="M3 5l9-3 4 3v10l-9 2-4-3z" fill="#eef6fc" stroke="#97b9d8" /><path d="M5 10h8c0-5-7-5-7 0s6 4 7 2M13 5l3-3" fill="none" stroke="#1769b9" stroke-width="2" /></svg></button>
      </div>
      <button class="job"><svg viewBox="0 0 18 18"><circle cx="9" cy="9" r="7.500" fill="#b6cde9" stroke="#e7f1fb" /><path d="M5.500 13V6h7v7M9 6v6" fill="none" stroke="#31619e" stroke-width="1.600" /></svg><span>基础综合练习<span class="m">08 -...</span></span></button>
      <button class="job cur"><svg viewBox="0 0 16 16"><rect x=".5" y=".5" width="15" height="15" fill="#2d93a8" stroke="#fff" /><path d="M5 5c3-2 6-1 6 1v6M11 8c-4-1-6 0-6 2s4 3 6 0" fill="none" stroke="#fff" stroke-width="2" /></svg><span class="m">AutoCAD 2004 - [...</span></button>
      <button class="job"><svg viewBox="0 0 18 18"><path d="M4 1h10v16H4z" fill="#c8dcf2" stroke="#6484ad" /><path d="M6 3h6v3H6z" fill="#5488be" /><path d="M6 9h2M9 9h2M6 12h2M9 12h2M6 15h2M9 15h2" stroke="#49688f" stroke-width="2" /></svg><span>计算器</span></button>
      <div class="tray">
        <button class="chev" aria-label="显示隐藏图标"><svg viewBox="0 0 16 16"><path d="M9.500 4L6 8l3.500 4" fill="none" stroke="#fff" stroke-width="2" /></svg></button>
        <svg class="ti" viewBox="0 0 16 16"><path d="M1 2h13v12H1z" fill="#fff" /><path d="M1 2h4v4l5-4h5L7 9l-2 1v4H1z" fill="#da1d1d" /><path d="M6 7h6l-1 2 5 5-2 2-5-5-2 2z" /></svg>
        <svg class="ti" viewBox="0 0 16 16"><path d="M7 1h8v7H7zM1 6h9v7H1z" fill="#27337b" stroke="#b7b9d4" /><path d="M3 15h6M10 11h4" stroke="#c4bfcf" stroke-width="2" /></svg>
        <time class="m">15:59</time>
      </div>
    </footer>

    <aside v-if="balloon" class="balloon">
      <div class="bhead">
        <svg class="info" viewBox="0 0 18 18"><path d="M9 1a7 7 0 0 1 2 13.500L9 17l-1-2.500A7 7 0 0 1 9 1z" fill="#eef4fd" stroke="#9aaeca" /><path d="M9 3.500v2M7 7.500h2V12M7 12.500h5" fill="none" stroke="#2148b8" stroke-width="2" /></svg>
        <strong>通信中心</strong>
        <button aria-label="关闭通知" @click="balloon = false"><svg viewBox="0 0 14 14"><path d="M3 3l8 8M11 3l-8 8" stroke="#000" stroke-width="2" /></svg></button>
      </div>
      <p>使软件保持最新的简单方法。</p>
      <a href="#update">单击此处。</a>
      <svg class="tail" viewBox="0 0 44 26"><path d="M2 0L33 18 20 0" fill="#ffffe1" /><path d="M1 1L34 19 20 1" fill="none" stroke="#000" /></svg>
    </aside>
  </div>
</template>

<style>
html, body { margin: 0; background: #ece9d8; }
</style>

<style scoped>
* { box-sizing: border-box; }
.app {
  position: relative; display: flex; flex-direction: column; min-height: 100vh; overflow: hidden;
  background: #ece9d8; color: #000; font: 12px/14px "Liberation Sans", "Noto Sans CJK SC", sans-serif;
}
.m { font-family: "Liberation Mono", "Noto Sans CJK SC", monospace; font-size: 10px; white-space: pre; }
button { margin: 0; padding: 0; border: 0; background: none; color: inherit; font: inherit; display: flex; align-items: center; justify-content: center; flex: none; white-space: nowrap; }
svg { display: block; flex: none; }

.title { display: flex; align-items: center; height: 26px; padding: 0 2px; background: linear-gradient(#3a93ff 0, #0a5ce8 4px, #0054e3 10px, #0062fb 20px, #0049d2 26px); }
.logo { width: 16px; height: 16px; }
.title h1 { flex: 1; margin: 0 0 0 4px; color: #fff; font: bold 13px/18px "Liberation Mono", monospace; text-shadow: 1px 1px #0a2a86; }
.winbtns { display: flex; gap: 2px; }
.winbtns button { width: 21px; height: 21px; border: 1px solid #fff; border-radius: 3px; background: linear-gradient(135deg, #789cf2, #2456d8 50%, #2f6bf0); }
.winbtns .close { background: linear-gradient(135deg, #f0987a, #da4420 50%, #c93812); }
.winbtns svg { width: 19px; height: 19px; }

.menu { display: flex; align-items: center; height: 20px; padding-left: 4px; border-bottom: 1px solid #fff; }
.menu > button { height: 18px; padding: 0 6px; line-height: 18px; }
.docicon { width: 16px; height: 16px; }
.docbtns { display: flex; margin-left: auto; gap: 2px; padding-right: 1px; }
.docbtns button { width: 17px; height: 17px; background: #f3f1e8; border-right: 1px solid #d5d1bf; border-bottom: 1px solid #d5d1bf; }
.docbtns svg { width: 16px; height: 16px; }

.row { display: flex; height: 28px; }
.bar { display: flex; align-items: center; padding-right: 4px; border-top: 1px solid #fff; border-right: 1px solid #aca899; border-bottom: 1px solid #aca899; margin-right: 1px; }
.grip { flex: none; width: 12px; height: 22px; background: linear-gradient(90deg, transparent 3px, #fff 3px 4px, #f6f4ea 4px 5px, #aca899 5px 6px, transparent 6px 7px, #fff 7px 8px, #f6f4ea 8px 9px, #aca899 9px 10px, transparent 10px); }
.tb { width: 23px; height: 22px; }
.tb svg { width: 18px; height: 18px; }
.tb.slim { width: 13px; }
.tb.slim svg { width: 9px; }
.sep { flex: none; width: 6px; height: 22px; background: linear-gradient(90deg, transparent 2px, #c5c2b2 2px 3px, #fff 3px 4px, transparent 4px); }
.combo { display: flex; align-items: center; flex: none; height: 22px; padding: 1px; background: #fff; border: 1px solid #7f9db9; }
.combo select { flex: 1; min-width: 0; height: 18px; padding: 0 3px; border: 0; background: transparent; color: #000; appearance: none; font: 10px/18px "Liberation Mono", monospace; }
.arrow { display: flex; align-items: center; justify-content: center; width: 15px; height: 18px; border-radius: 2px; background: linear-gradient(#d3e0fe, #b3c9f8); }
.arrow svg { width: 9px; height: 9px; fill: none; stroke: #3c5684; stroke-width: 2; }
.w100 { width: 100px; }
.w120 { width: 120px; }
.w125 { width: 125px; }
.w150 { width: 150px; }
.w160 { width: 160px; }
.w300 { width: 300px; }
.off { background: #ece9d8; border-color: #c9c7ba; }
.off select { color: #a9a696; opacity: 1; padding-left: 8px; }
.off .arrow { background: #f4f3ea; }
.off .arrow svg { stroke: #c9c7ba; }
.li { width: 15px; height: 15px; margin-left: 1px; }
.swatch { flex: none; width: 10px; height: 10px; margin: 0 2px 0 6px; border: 1px solid #000; }
.swatch.first { margin-left: 4px; margin-right: 1px; }
.sample { flex: none; width: 35px; height: 1px; margin: 0 2px 0 3px; background: #000; }
.sample.long { width: 60px; }

.work { display: flex; flex: 1; min-height: 500px; margin-top: 1px; }
.palettes { display: flex; align-items: flex-start; gap: 2px; width: 53px; padding-left: 1px; }
.palette { width: 24px; padding: 1px 0 4px; border-left: 1px solid #fff; border-right: 1px solid #aca899; border-bottom: 1px solid #aca899; }
.vgrip { display: block; height: 9px; margin: 0 2px; background: linear-gradient(transparent 2px, #fff 2px 3px, #aca899 3px 4px, transparent 4px 6px, #fff 6px 7px, #aca899 7px 8px, transparent 8px); }
.pb { width: 22px; height: 22px; }
.pb svg { width: 18px; height: 18px; }
.view { display: flex; flex-direction: column; flex: 1; min-width: 0; border-left: 1px solid #716f64; border-top: 1px solid #716f64; }
.stage { display: flex; flex: 1; min-height: 0; }
.canvas { flex: 1; min-width: 0; width: 100%; height: 100%; min-height: 480px; background: #000; align-self: stretch; }
.dim { fill: #f00016; font: 12px "DejaVu Sans Mono", monospace; text-anchor: middle; }
.vscroll { display: flex; flex-direction: column; width: 19px; padding: 0 2px; background: linear-gradient(90deg, #f3f2ec, #fefefb 16px, #ece9d8 17px); }
.sb { width: 16px; height: 17px; border: 1px solid #fff; border-radius: 3px; background: #c3d3fd; box-shadow: inset 0 0 0 1px #b0c4f4; }
.sb svg { width: 9px; height: 9px; fill: none; stroke: #4d6185; stroke-width: 2; }
.sb.thumb { margin-top: 133px; }
.sb.thumb svg { stroke: #8ba8ea; stroke-width: 1; }
.strip { display: flex; height: 15px; align-items: flex-start; }
.nav { display: flex; }
.nav button { width: 18px; height: 14px; border: 1px solid #aca899; border-top-color: #fff; border-left-color: #fff; }
.nav svg { width: 16px; height: 13px; }
.tabs { display: flex; margin-left: 4px; }
.tabs button { position: relative; width: 47px; height: 14px; margin-right: -2px; }
.tabs button.on { margin-right: -9px; }
.tabs svg { position: absolute; inset: 0; width: 100%; height: 100%; fill: #ece9d8; stroke: #000; }
.tabs .on { z-index: 1; width: 47px; padding-right: 8px; color: #fff; font-weight: bold; }
.tabs .on svg { width: 43px; fill: #000; }
.tabs button > span { position: relative; line-height: 13px; }
.hscroll { display: flex; width: 35%; margin-left: auto; height: 15px; background: #fbfbf7; }
.split { width: 5px; height: 13px; border: 1px solid #aca899; background: #ece9d8; }
.hscroll .sb { height: 15px; }

.cmd { display: flex; align-items: center; height: 41px; margin-top: 1px; padding: 5px 0 4px 4px; border-bottom: 1px solid #aca899; background: linear-gradient(#f8f7f0 0 4px, #ece9d8 4px 5px, #000 5px 7px, #ece9d8 7px); }
.cmd .grip { height: 20px; }
.cmdbox { display: flex; flex: 1; align-items: flex-end; align-self: flex-end; height: 24px; margin-left: 1px; padding: 0 2px; border-top: 2px solid #000; border-left: 1px solid #000; background: #fff; }
.cmdbox label { font-size: 14px; line-height: 14px; }
.cmdbox input { flex: 1; min-width: 0; height: 16px; padding: 0; border: 0; outline: 0; font: 12px "Liberation Mono", monospace; }

.status { display: flex; align-items: center; gap: 4px; height: 21px; padding: 1px 0 0 5px; border-top: 1px solid #fff; }
.coords { width: 250px; height: 18px; padding-left: 1px; border: 1px solid #c1beae; font: 10px/18px "Liberation Mono", monospace; white-space: pre; }
.status > button { height: 18px; padding: 0 1px; border: 1px solid #fff; border-right-color: #aca899; border-bottom-color: #aca899; }
.status > button.down { border-color: #000 #fff #fff #000; }
.stray { display: flex; align-items: center; margin-left: auto; gap: 4px; padding-right: 1px; }
.comm { padding: 0 2px; border: 1px solid #aca899; border-color: #aca899 #fff #fff #aca899; }
.comm svg { width: 18px; height: 16px; }
.stray button { width: 10px; height: 14px; }
.stray button svg { width: 9px; height: 9px; }

.task { display: flex; align-items: stretch; height: 30px; background: linear-gradient(#3c81f3 0, #245edb 4px, #2560de 24px, #1941a5 30px); color: #fff; }
.start { gap: 5px; width: 97px; padding-right: 8px; border-radius: 0 10px 10px 0; background: linear-gradient(#5eac56, #388c36 5px, #3a9a3a 22px, #256b27); font: italic 18px/24px "Noto Sans CJK SC", sans-serif; text-shadow: 1px 1px 1px #123c12; }
.start svg { width: 20px; height: 20px; }
.quick { display: flex; align-items: center; gap: 5px; width: 84px; padding-left: 11px; }
.quick svg { width: 18px; height: 18px; }
.job { flex: 0 1 158px; min-width: 0; justify-content: flex-start; gap: 3px; margin: 3px 1px; padding-left: 8px; border-radius: 3px; background: linear-gradient(#5d9bff, #3c81f3 4px, #3a7cf0 20px, #2f68d8); }
.job svg { width: 17px; height: 17px; }
.job.cur { background: #1e52b7; box-shadow: inset 1px 1px 1px #123a8c; }
.tray { display: flex; align-items: center; gap: 3px; margin-left: auto; width: 95px; background: linear-gradient(#16b0f2, #1290e8 5px, #0f8bea 22px, #0d6fc4); }
.chev { width: 18px; height: 18px; margin-left: -9px; border-radius: 9px; background: radial-gradient(#4aa4f0, #1767cf); }
.chev svg { width: 16px; height: 16px; }
.ti { width: 16px; height: 16px; }
.tray time { margin-left: 3px; }

.balloon { position: absolute; right: 3px; bottom: 59px; width: 184px; height: 74px; padding: 6px 8px 0 14px; border: 1px solid #000; border-radius: 14px; background: #ffffe1; }
.bhead { display: flex; align-items: center; gap: 7px; margin-left: -6px; }
.bhead strong { flex: 1; font-size: 13px; line-height: 18px; }
.info { width: 18px; height: 18px; }
.bhead button { width: 16px; height: 16px; border: 1px solid #808080; background: #ece9d8; }
.bhead button svg { width: 12px; height: 12px; }
.balloon p { margin: 4px 0 4px; white-space: nowrap; }
.balloon a { display: block; width: 60px; white-space: nowrap; color: #00f; }
.tail { position: absolute; left: 122px; top: 71px; width: 44px; height: 26px; }
</style>
